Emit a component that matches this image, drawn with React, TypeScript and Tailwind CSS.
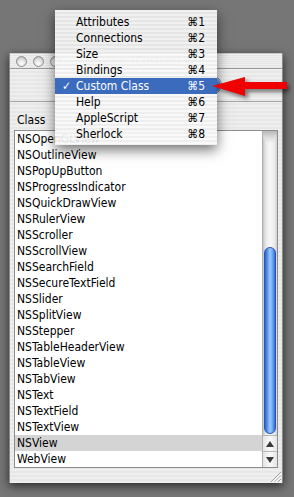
import React from "react";

const classes = [
  "NSOpenGLView",
  "NSOutlineView",
  "NSPopUpButton",
  "NSProgressIndicator",
  "NSQuickDrawView",
  "NSRulerView",
  "NSScroller",
  "NSScrollView",
  "NSSearchField",
  "NSSecureTextField",
  "NSSlider",
  "NSSplitView",
  "NSStepper",
  "NSTableHeaderView",
  "NSTableView",
  "NSTabView",
  "NSText",
  "NSTextField",
  "NSTextView",
  "NSView",
  "WebView",
];

const menuItems = [
  { label: "Attributes", key: "1" },
  { label: "Connections", key: "2" },
  { label: "Size", key: "3" },
  { label: "Bindings", key: "4" },
  { label: "Custom Class", key: "5", active: true },
  { label: "Help", key: "6" },
  { label: "AppleScript", key: "7" },
  { label: "Sherlock", key: "8" },
];

function Light() {
  return (
    <div className="w-[11px] h-[11px] rounded-full border border-[#8e8e8e] bg-[radial-gradient(circle_at_50%_70%,#ffffff_0%,#e4e4e4_45%,#b0b0b0_100%)]" />
  );
}

export default function App() {
  return (
    <div className="relative w-[294px] h-[497px] overflow-hidden bg-[#767676] font-['DejaVu_Sans_Condensed','DejaVu_Sans',sans-serif] [font-stretch:condensed] text-[12px] text-black">
      {/* Window */}
      <div className="absolute left-[9px] top-[53px] w-[274px] h-[430px] flex flex-col bg-[repeating-linear-gradient(to_bottom,#eeeeee_0px,#eeeeee_2px,#e7e7e7_2px,#e7e7e7_4px)] shadow-[0_3px_9px_rgba(0,0,0,0.65)] border-x border-[#8a8a8a]">
        {/* Title bar */}
        <div className="relative h-[16px] flex items-center border-t border-[#c8c8c8] border-b border-b-[#9a9a9a] bg-[repeating-linear-gradient(to_bottom,#efefef_0px,#efefef_1px,#e6e6e6_1px,#e6e6e6_2px)]">
          <div className="flex items-center gap-[6px] ml-[6px]">
            <Light />
            <Light />
            <Light />
          </div>
          <div className="ml-[26px] text-[#a8a8a8] leading-none">NSView (Custom) Info</div>
        </div>
        {/* Toolbar */}
        <div className="h-[33px] flex items-center justify-end pr-[60px] border-b border-[#a6a6a6]">
          <div className="w-[150px] h-[18px] rounded-full flex overflow-hidden border border-[#7d7d7d] bg-white">
            <div className="flex-1" />
            <div className="w-[20px] h-full rounded-r-full bg-[linear-gradient(to_bottom,#a9cbf4,#3d74cf_50%,#5f97e6)]" />
          </div>
        </div>
        {/* Label */}
        <div className="h-[28px] flex items-end pb-[2px] pl-[7px] leading-[16px]">Class</div>
        {/* List box */}
        <div className="mx-[4px] h-[338px] flex border border-[#8c8c8c] bg-white">
          <div className="flex-1 flex flex-col">
            {classes.map((c) => (
              <div
                key={c}
                className={`h-[16px] leading-[16px] pl-[2px] whitespace-nowrap ${
                  c === "NSView" ? "bg-[#d4d4d4]" : ""
                }`}
              >
                {c}
              </div>
            ))}
          </div>
          {/* Scroller */}
          <div className="w-[15px] flex flex-col border-l border-[#b0b0b0]">
            <div className="flex-1 relative bg-[linear-gradient(to_right,#c4c4c4_0%,#e8e8e8_20%,#f8f8f8_50%,#ececec_80%,#d0d0d0_100%)]">
              <div className="absolute left-0 right-0 top-0 h-[12px] rounded-b-full bg-[linear-gradient(to_bottom,#b8b8b8,#e0e0e0_60%,transparent)]" />
              <div className="absolute left-[1px] right-[1px] top-[116px] h-[187px] rounded-full border border-[#2a57b5] bg-[linear-gradient(to_right,#2e63cc_0%,#5a95ee_25%,#9fcbff_50%,#6aa6f4_75%,#3169d2_100%)]" />
            </div>
            <div className="h-[16px] flex items-center justify-center border-t border-[#b8b8b8] bg-[linear-gradient(to_right,#e4e4e4,#fafafa_50%,#e4e4e4)]">
              <div className="w-0 h-0 border-x-[4px] border-x-transparent border-b-[6px] border-b-[#3a3a3a]" />
            </div>
            <div className="h-[16px] flex items-center justify-center border-t border-[#b8b8b8] bg-[linear-gradient(to_right,#e4e4e4,#fafafa_50%,#e4e4e4)]">
              <div className="w-0 h-0 border-x-[4px] border-x-transparent border-t-[6px] border-t-[#3a3a3a]" />
            </div>
          </div>
        </div>
        {/* Bottom with grow box */}
        <div className="flex-1 flex items-end justify-end pr-[1px] pb-[1px]">
          <svg width="11" height="11" viewBox="0 0 11 11">
            <line x1="1" y1="11" x2="11" y2="1" stroke="#9a9a9a" strokeWidth="1" />
            <line x1="2" y1="11" x2="11" y2="2" stroke="#ffffff" strokeWidth="1" />
            <line x1="4.5" y1="11" x2="11" y2="4.5" stroke="#9a9a9a" strokeWidth="1" />
            <line x1="5.5" y1="11" x2="11" y2="5.5" stroke="#ffffff" strokeWidth="1" />
            <line x1="8" y1="11" x2="11" y2="8" stroke="#9a9a9a" strokeWidth="1" />
            <line x1="9" y1="11" x2="11" y2="9" stroke="#ffffff" strokeWidth="1" />
          </svg>
        </div>
      </div>

      {/* Menu */}
      <div className="absolute left-[55px] top-[10px] w-[162px] h-[135px] pt-[4px] bg-[repeating-linear-gradient(to_bottom,rgba(250,250,250,0.93)_0px,rgba(250,250,250,0.93)_2px,rgba(238,238,238,0.93)_2px,rgba(238,238,238,0.93)_4px)] shadow-[0_5px_12px_rgba(0,0,0,0.55)]">
        {menuItems.map((m) => (
          <div
            key={m.label}
            className={`h-[16px] flex items-center leading-[16px] ${
              m.active ? "bg-[#3a6bbd] text-white" : ""
            }`}
          >
            <div className="w-[21px] pl-[7px]">{m.active ? "✓" : ""}</div>
            <div className="flex-1">{m.label}</div>
            <div className="pr-[12px]">⌘{m.key}</div>
          </div>
        ))}
      </div>

      {/* Red arrow */}
      <svg className="absolute left-0 top-0" width="294" height="120" viewBox="0 0 294 120">
        <defs>
          <filter id="sh" x="-20%" y="-50%" width="140%" height="200%">
            <feGaussianBlur stdDeviation="2" />
          </filter>
        </defs>
        <polygon
          points="215,89 248,80 248,85 289,85 289,92 248,92 248,99"
          fill="rgba(0,0,0,0.5)"
          filter="url(#sh)"
        />
        <polygon points="212,86 245,77 245,82 287,82 287,89 245,89 245,96" fill="#f00000" />
      </svg>
    </div>
  );
}
